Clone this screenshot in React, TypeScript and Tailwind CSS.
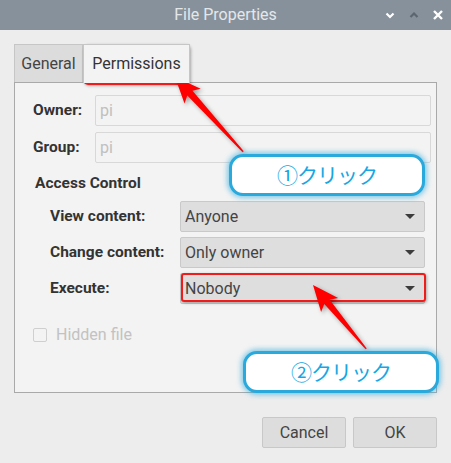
import React from 'react'

const font = { fontFamily: 'Roboto, "Noto Sans", sans-serif' }

const Caret = () => (
  <svg width="10" height="6" viewBox="0 0 10 6" className="shrink-0">
    <path d="M0 0 L10 0 L5 5 Z" fill="#3c3c3c" />
  </svg>
)

const Combo = ({ value }: { value: string }) => (
  <div className="flex h-[31px] w-[245px] items-center justify-between rounded-[2px] border border-[#c9c9c9] bg-[#dedede] pl-[4px] pr-[9px] text-[16px] text-[#444]">
    <span>{value}</span>
    <Caret />
  </div>
)

const TextRow = ({ label }: { label: string }) => (
  <div className="flex items-center">
    <div className="w-[62px] text-[15.5px] font-bold text-[#333]">{label}</div>
    <div className="flex h-[31px] flex-1 items-center rounded-[2px] border border-[#d8d8d8] bg-[#f3f3f3] px-[4px] text-[16px] text-[#c0c0c0]">
      pi
    </div>
  </div>
)

const ComboRow = ({ label, value }: { label: string; value: string }) => (
  <div className="flex items-center">
    <div className="w-[130px] text-[15.5px] font-bold text-[#333]">{label}</div>
    <Combo value={value} />
  </div>
)

const Callout = ({ text, className }: { text: string; className: string }) => (
  <div
    className={`absolute flex h-[42px] w-[196px] items-center justify-center rounded-[14px] border-[3px] border-[#2aa9dc] bg-white text-[21px] tracking-[-1px] text-[#16a7e4] shadow-[0_0_5px_2px_rgba(42,169,220,0.55)] ${className}`}
    style={{ fontFamily: '"Noto Sans CJK JP", "Noto Sans", sans-serif' }}
  >
    {text}
  </div>
)

export default function App() {
  return (
    <div className="relative h-[463px] w-[451px] overflow-hidden bg-[#ededed]" style={font}>
      {/* title bar */}
      <div className="relative flex h-[30px] items-center justify-center bg-[#87919b]">
        <span className="text-[16px] text-[#e4e7ea]">File Properties</span>
        <div className="absolute right-[8px] top-0 flex h-[30px] items-center gap-[14px]">
          <svg width="10" height="10" viewBox="0 0 10 10">
            <path d="M1.5 3.5 L5 7 L8.5 3.5" stroke="#fff" strokeWidth="2.2" fill="none" />
          </svg>
          <svg width="10" height="10" viewBox="0 0 10 10">
            <path d="M1.5 7 L5 3.5 L8.5 7" stroke="#5d6670" strokeWidth="2.2" fill="none" />
          </svg>
          <svg width="10" height="10" viewBox="0 0 10 10">
            <path d="M1 1 L9 9 M9 1 L1 9" stroke="#fff" strokeWidth="2.4" fill="none" />
          </svg>
        </div>
      </div>

      {/* notebook */}
      <div className="px-[14px] pt-[14px]">
        <div className="flex h-[38px] items-end">
          <div className="flex h-[38px] w-[69px] items-center justify-center border border-b-0 border-[#c6c6c6] bg-[#dcdcdc] text-[16px] text-[#444]">
            General
          </div>
          <div className="relative z-10 -mb-px flex h-[39px] w-[107px] items-center justify-center border border-b-0 border-[#c6c6c6] bg-[#f3f3f3] text-[16px] text-[#333]">
            Permissions
          </div>
        </div>
        <div className="flex h-[311px] flex-col border border-[#a9a9a9] bg-[#f3f3f3] pl-[18px] pr-[5px] pt-[12px]">
          <div className="flex flex-col gap-[6px]">
            <TextRow label="Owner:" />
            <TextRow label="Group:" />
          </div>
          <div className="ml-[2px] mt-[9px] text-[15.5px] font-bold text-[#333]">Access Control</div>
          <div className="ml-[17px] mt-[6px] flex flex-col gap-[5px]">
            <ComboRow label="View content:" value="Anyone" />
            <ComboRow label="Change content:" value="Only owner" />
            <ComboRow label="Execute:" value="Nobody" />
          </div>
          <div className="mt-[19px] flex items-center gap-[9px]">
            <div className="h-[14px] w-[14px] rounded-[2px] border border-[#cfcfcf] bg-[#f3f3f3]" />
            <span className="text-[16px] text-[#c2c2c2]">Hidden file</span>
          </div>
        </div>
      </div>

      {/* buttons */}
      <div className="mt-[24px] flex justify-end gap-[7px] pr-[14px]">
        <div className="flex h-[31px] w-[84px] items-center justify-center rounded-[2px] border border-[#c8c8c8] bg-[#dddddd] text-[16px] text-[#444]">
          Cancel
        </div>
        <div className="flex h-[31px] w-[84px] items-center justify-center rounded-[2px] border border-[#c8c8c8] bg-[#dddddd] text-[16px] text-[#444]">
          OK
        </div>
      </div>

      {/* annotations */}
      <div className="pointer-events-none absolute left-[83px] top-[44px] h-[41px] w-[107px] rounded-[5px] border-2 border-[#f01c1c] shadow-[1px_1px_3px_rgba(0,0,0,0.3)]" />
      <div className="pointer-events-none absolute left-[181px] top-[273px] h-[29px] w-[245px] rounded-[3px] border-2 border-[#f01c1c] shadow-[1px_1px_3px_rgba(0,0,0,0.3)]" />

      <svg
        className="pointer-events-none absolute left-0 top-0"
        width="451"
        height="463"
        style={{ filter: 'drop-shadow(2px 2px 2px rgba(0,0,0,0.35))' }}
      >
        <polygon
          points="175,77 200.7,88.7 192.5,90.8 243.8,151.2 242.5,152.2 187.3,95.6 184.5,103.5"
          fill="#ff0000"
        />
        <polygon
          points="313,285 338.1,298 329.7,299.7 366.8,348.5 365.5,349.3 324.3,304.1 321.1,312"
          fill="#ff0000"
        />
      </svg>

      <Callout text="①クリック" className="left-[229px] top-[154px]" />
      <Callout text="②クリック" className="left-[243px] top-[351px]" />
    </div>
  )
}
